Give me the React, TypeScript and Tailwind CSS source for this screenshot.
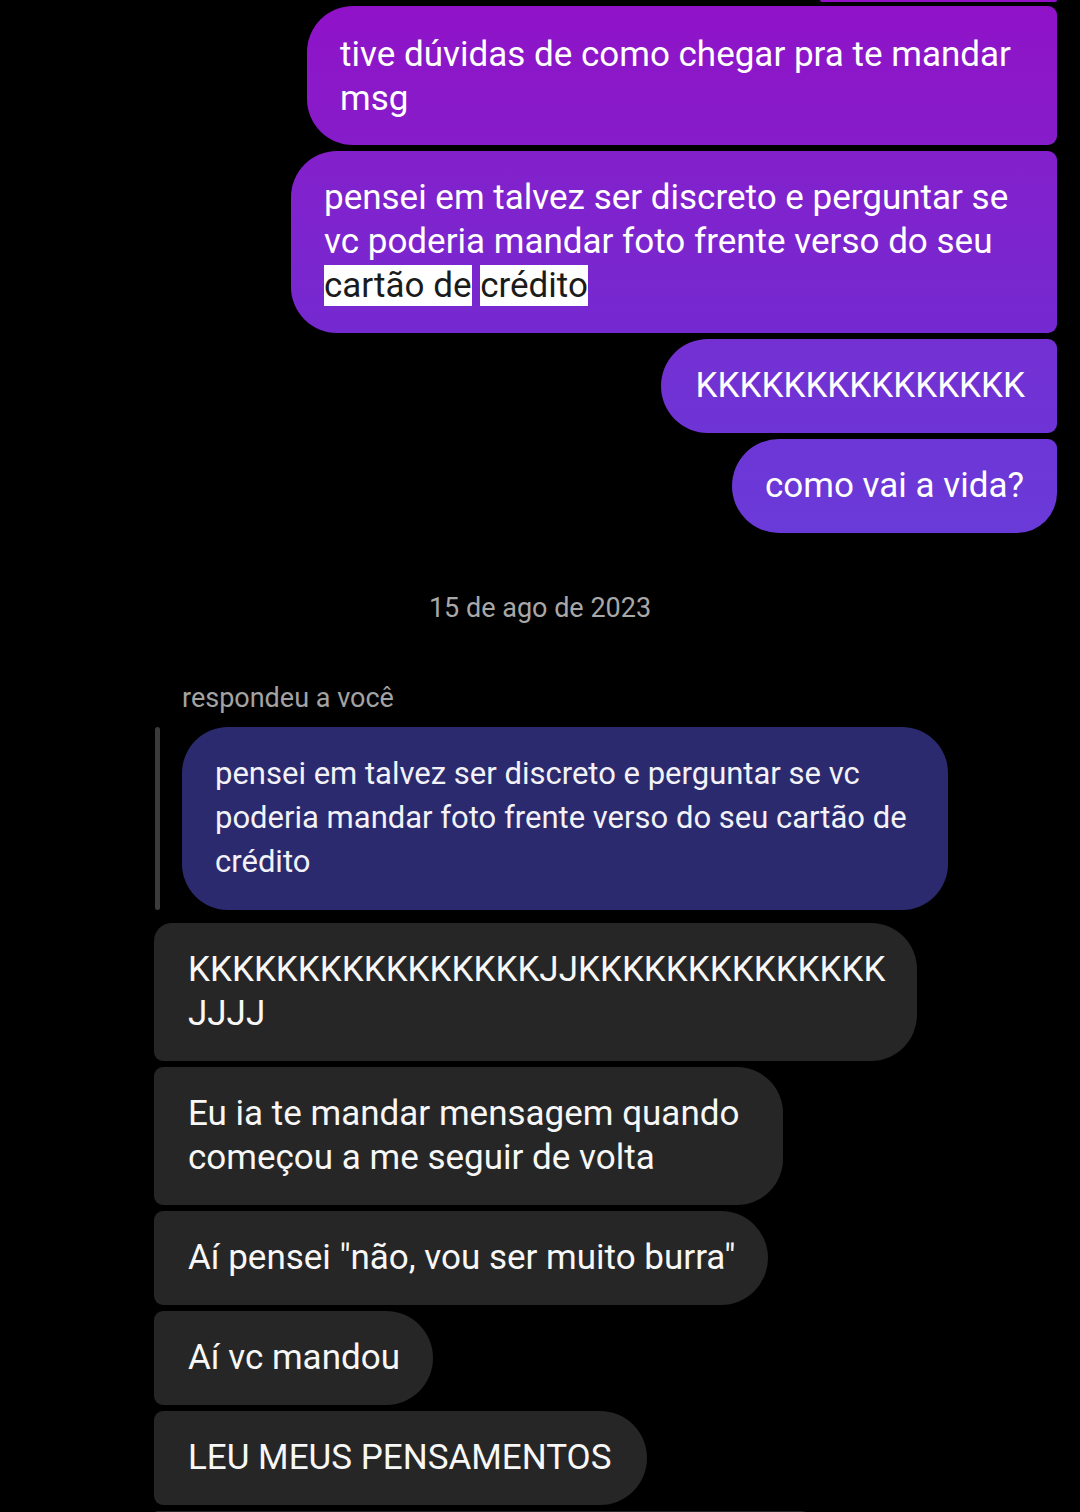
const font = { fontFamily: "Roboto, 'Noto Sans', sans-serif" };

export default function App() {
  return (
    <div
      className="w-[1080px] h-[1512px] overflow-hidden bg-black text-white"
      style={font}
    >
      {/* Sent messages */}
      <div className="flex flex-col items-end gap-[6px] pr-[23px]">
        <div className="w-[237px] h-[2px] rounded-b-[6px] bg-[#9310c8]" />
        <div className="-mt-[2px] w-[750px] rounded-l-[46px] rounded-r-[9px] bg-gradient-to-b from-[#9012c8] to-[#861cca] pl-[33px] pr-[20px] pt-[27px] pb-[24px] text-[35px] leading-[44px] whitespace-nowrap">
          tive dúvidas de como chegar pra te mandar
          <br />
          msg
        </div>
        <div className="w-[766px] rounded-l-[46px] rounded-r-[9px] bg-gradient-to-b from-[#8320cc] to-[#7529d0] pl-[33px] pr-[20px] py-[25px] text-[35px] leading-[44px] whitespace-nowrap">
          pensei em talvez ser discreto e perguntar se
          <br />
          vc poderia mandar foto frente verso do seu
          <br />
          <span className="bg-white text-[#1b1b1b]">cartão de</span>{" "}
          <span className="bg-white text-[#1b1b1b]">crédito</span>
        </div>
        <div className="rounded-l-[47px] rounded-r-[9px] bg-gradient-to-b from-[#7430d3] to-[#6e34d5] pl-[35px] pr-[32px] py-[25px] text-[35px] leading-[44px] whitespace-nowrap">
          KKKKKKKKKKKKKKK
        </div>
        <div className="rounded-l-[47px] rounded-tr-[9px] rounded-br-[40px] bg-gradient-to-b from-[#6d36d6] to-[#6a3ad8] px-[33px] py-[25px] text-[35px] leading-[44px] whitespace-nowrap">
          como vai a vida?
        </div>
      </div>

      {/* Date */}
      <div className="mt-[59px] text-center text-[27px] leading-[32px] text-[#a8a8a8]">
        15 de ago de 2023
      </div>

      {/* Reply */}
      <div className="mt-[58px] pl-[182px] text-[27px] leading-[32px] text-[#a3a3a3]">
        respondeu a você
      </div>
      <div className="mt-[13px] flex pl-[155px]">
        <div className="w-[5px] rounded-full bg-[#3b3b3b]" />
        <div className="ml-[22px] w-[766px] rounded-[46px] bg-[#2c2a6f] pl-[33px] pr-[20px] pt-[25px] pb-[26px] text-[31px] leading-[44px] text-[#f2f2f7] whitespace-nowrap">
          pensei em talvez ser discreto e perguntar se vc
          <br />
          poderia mandar foto frente verso do seu cartão de
          <br />
          crédito
        </div>
      </div>

      {/* Received messages */}
      <div className="mt-[13px] flex flex-col items-start gap-[6px] pl-[154px] text-[35px] leading-[44px] text-[#f7f7f7]">
        <div className="w-[763px] rounded-tl-[18px] rounded-bl-[9px] rounded-r-[46px] bg-[#262626] pl-[34px] pr-[20px] py-[25px] whitespace-nowrap">
          KKKKKKKKKKKKKKKKJJKKKKKKKKKKKKKK
          <br />
          JJJJ
        </div>
        <div className="w-[629px] rounded-l-[9px] rounded-r-[46px] bg-[#262626] pl-[34px] pr-[20px] py-[25px] whitespace-nowrap">
          Eu ia te mandar mensagem quando
          <br />
          começou a me seguir de volta
        </div>
        <div className="rounded-l-[9px] rounded-r-[47px] bg-[#262626] pl-[34px] pr-[33px] py-[25px] whitespace-nowrap">
          Aí pensei "não, vou ser muito burra"
        </div>
        <div className="rounded-l-[9px] rounded-r-[47px] bg-[#262626] pl-[34px] pr-[33px] py-[25px] whitespace-nowrap">
          Aí vc mandou
        </div>
        <div className="rounded-l-[9px] rounded-r-[47px] bg-[#262626] pl-[34px] pr-[36px] py-[25px] whitespace-nowrap">
          LEU MEUS PENSAMENTOS
        </div>
        <div className="w-[666px] h-[40px] rounded-l-[9px] rounded-r-[47px] bg-[#262626]" />
      </div>
    </div>
  );
}
